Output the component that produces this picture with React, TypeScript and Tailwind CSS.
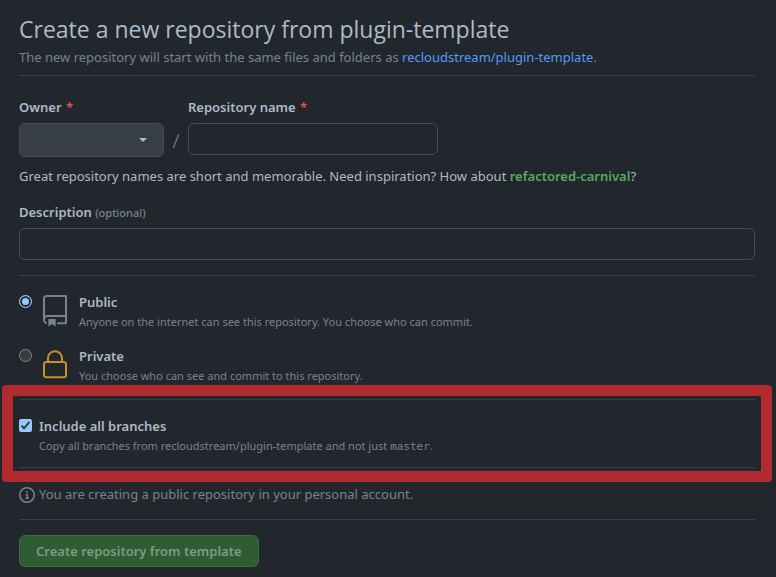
import type { ReactNode } from "react";

function Required() {
  return <span className="ml-px text-[#e5534b]">*</span>;
}

function Rule() {
  return <hr className="border-t border-[#373e47]" />;
}

function RepoIcon() {
  return (
    <svg viewBox="0 0 24 24" className="h-8 w-8 fill-[#768390]" aria-hidden="true">
      <path
        fillRule="evenodd"
        d="M3 2.75A2.75 2.75 0 015.75 0h14.5a.75.75 0 01.75.75v20.5a.75.75 0 01-.75.75h-6a.75.75 0 010-1.5h5.25v-4H6A1.5 1.5 0 004.5 18v.75c0 .716.43 1.334 1.05 1.605a.75.75 0 01-.6 1.374A3.25 3.25 0 013 18.75v-16zM19.5 1.5V15H6c-.546 0-1.059.146-1.5.401V2.75c0-.69.56-1.25 1.25-1.25H19.5z"
      />
      <path d="M7 18.25a.25.25 0 01.25-.25h5a.25.25 0 01.25.25v5.01a.25.25 0 01-.397.201l-2.206-1.604a.25.25 0 00-.294 0L7.397 23.46a.25.25 0 01-.397-.2v-5.01z" />
    </svg>
  );
}

function LockIcon() {
  return (
    <svg viewBox="0 0 24 24" className="h-8 w-8 fill-[#c69026]" aria-hidden="true">
      <path
        fillRule="evenodd"
        d="M6 9V7.25C6 3.845 8.503 1 12 1s6 2.845 6 6.25V9h.5a2.5 2.5 0 012.5 2.5v8a2.5 2.5 0 01-2.5 2.5h-13A2.5 2.5 0 013 19.5v-8A2.5 2.5 0 015.5 9H6zm1.5-1.75C7.5 4.58 9.422 2.5 12 2.5c2.578 0 4.5 2.08 4.5 4.75V9h-9V7.25zm-3 4.25a1 1 0 011-1h13a1 1 0 011 1v8a1 1 0 01-1 1h-13a1 1 0 01-1-1v-8z"
      />
    </svg>
  );
}

function InfoIcon() {
  return (
    <svg viewBox="0 0 16 16" className="h-4 w-4 shrink-0 fill-[#768390]" aria-hidden="true">
      <path
        fillRule="evenodd"
        d="M8 1.5a6.5 6.5 0 100 13 6.5 6.5 0 000-13zM0 8a8 8 0 1116 0A8 8 0 010 8zm6.5-.25A.75.75 0 017.25 7h1a.75.75 0 01.75.75v2.75h.25a.75.75 0 010 1.5h-2a.75.75 0 010-1.5h.25v-2h-.25a.75.75 0 01-.75-.75zM8 6a1 1 0 100-2 1 1 0 000 2z"
      />
    </svg>
  );
}

type VisibilityProps = {
  id: string;
  title: string;
  note: string;
  icon: ReactNode;
  checked?: boolean;
};

function VisibilityOption({ id, title, note, icon, checked }: VisibilityProps) {
  return (
    <div className="flex items-start">
      <input
        type="radio"
        name="visibility"
        id={id}
        defaultChecked={checked}
        className="mt-[3px] h-[13px] w-[13px] shrink-0 appearance-none rounded-full border border-[#858585] bg-[#3b3b3b] checked:border-[#99c8ff] checked:bg-[#99c8ff] checked:shadow-[inset_0_0_0_2px_#22272e]"
      />
      <div className="mt-[3px] ml-[7px] shrink-0">{icon}</div>
      <div className="ml-2">
        <label htmlFor={id} className="block leading-[21px] font-semibold">
          {title}
        </label>
        <p className="text-[11px] leading-[18px] text-[#768390]">{note}</p>
      </div>
    </div>
  );
}

export default function App() {
  return (
    <main className="min-h-screen bg-[#22272e] pt-3 pr-[21px] pb-[10px] pl-[19px] font-['Noto_Sans','Open_Sans',sans-serif] text-[13px] leading-[21px] text-[#adbac7]">
      <h1 className="font-['Open_Sans','Noto_Sans',sans-serif] text-[23px] leading-[35px]">
        Create a new repository from plugin-template
      </h1>
      <p className="mb-[7px] text-[#768390]">
        The new repository will start with the same files and folders as{" "}
        <a href="#template" className="text-[#539bf5]">
          recloudstream/plugin-template
        </a>
        .
      </p>
      <Rule />

      <form onSubmit={(event) => event.preventDefault()}>
        <div className="mt-[21px] flex items-start">
          <div className="w-[145px]">
            <label htmlFor="owner" className="block font-semibold">
              Owner <Required />
            </label>
            <div className="relative mt-[5px]">
              <select
                id="owner"
                className="block h-[34px] w-full appearance-none rounded-md border border-[#444c56] bg-[#373e47] px-4"
              >
                <option value=""></option>
              </select>
              <span className="pointer-events-none absolute top-[15px] right-[17px] border-x-4 border-t-4 border-x-transparent border-t-[#adbac7]" />
            </div>
          </div>
          <span className="mt-[32px] w-6 text-center text-xl leading-[24px] font-light text-[#768390]">/</span>
          <div className="w-[250px]">
            <label htmlFor="repository" className="block font-semibold">
              Repository name <Required />
            </label>
            <input
              id="repository"
              type="text"
              className="mt-[5px] block h-8 w-full rounded-md border border-[#444c56] bg-[#22272e] px-3"
            />
          </div>
        </div>
        <p className="mt-[9px]">
          Great repository names are short and memorable. Need inspiration? How about{" "}
          <strong className="font-semibold text-[#57ab5a]">refactored-carnival</strong>?
        </p>

        <label htmlFor="description" className="mt-[15px] block font-semibold">
          Description <span className="text-[11px] font-medium text-[#768390]">(optional)</span>
        </label>
        <input
          id="description"
          type="text"
          className="mt-[5px] mb-[15px] block h-8 w-full rounded-md border border-[#444c56] bg-[#22272e] px-3"
        />
        <Rule />

        <div className="mt-4 mb-[14px] flex flex-col gap-[15px]">
          <VisibilityOption
            id="public"
            title="Public"
            note="Anyone on the internet can see this repository. You choose who can commit."
            icon={<RepoIcon />}
            checked
          />
          <VisibilityOption
            id="private"
            title="Private"
            note="You choose who can see and commit to this repository."
            icon={<LockIcon />}
          />
        </div>

        <section className="relative">
          <div className="pointer-events-none absolute -inset-x-[17px] -inset-y-[14px] rounded-[4px] border-[11px] border-[#b02a2e]" />
          <Rule />
          <div className="mt-4 mb-[11px] flex items-start">
            <input
              id="branches"
              type="checkbox"
              defaultChecked
              className="mt-[3px] h-[13px] w-[13px] shrink-0 appearance-none rounded-[2px] bg-[#99c8ff]"
            />
            <svg
              viewBox="0 0 13 13"
              className="pointer-events-none mt-[3px] -ml-[13px] h-[13px] w-[13px] shrink-0 fill-none stroke-[#3b3b3b] stroke-2"
              aria-hidden="true"
            >
              <path d="M2.5 6.8L5 9.3L10.5 2.8" />
            </svg>
            <div className="ml-[7px]">
              <label htmlFor="branches" className="block font-semibold">
                Include all branches
              </label>
              <p className="text-[11px] leading-[18px] text-[#768390]">
                Copy all branches from recloudstream/plugin-template and not just{" "}
                <code className="font-['DejaVu_Sans_Mono',monospace] text-[11px]">master</code>.
              </p>
            </div>
          </div>
          <Rule />
        </section>

        <p className="mt-4 mb-[14px] flex items-center gap-1 text-[#768390]">
          <InfoIcon />
          You are creating a public repository in your personal account.
        </p>
        <Rule />
        <button
          type="submit"
          className="mt-[15px] h-8 rounded-md border border-[#3b6943] bg-[#2e5c33] px-4 font-semibold text-[#7c9d83]"
        >
          Create repository from template
        </button>
      </form>
    </main>
  );
}
